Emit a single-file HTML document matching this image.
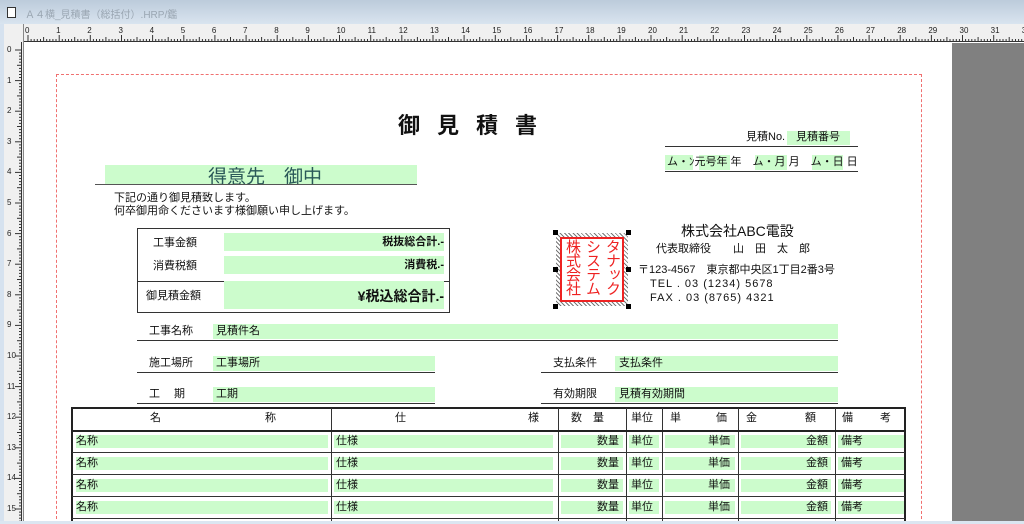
<!DOCTYPE html>
<html style="width:1024px;height:524px;overflow:hidden"><head><meta charset="utf-8"><style>
*{margin:0;padding:0;box-sizing:border-box}
body{width:1024px;height:524px;overflow:hidden;position:relative;background:#fff;font-family:"Liberation Sans","Noto Sans CJK JP",sans-serif;color:#111}
.a{position:absolute;white-space:nowrap}
.g{position:absolute;background:#ccfccc}
.l{position:absolute;height:1px;background:#333}
.t{font-size:11px;line-height:13px}
</style></head><body>
<div class="a" style="left:0;top:0;width:1024px;height:24px;background:linear-gradient(#bccbdb,#d9e4ef)"></div>
<div class="a" style="left:7px;top:7px;width:9px;height:11px;border:1px solid #333;background:#fff"></div>
<div class="a" style="left:25px;top:6px;font-size:10px;color:#9aa6b2">Ａ４横_見積書（総括付）.HRP/鑑</div>
<div class="a" style="left:0;top:24px;width:1024px;height:18px;background:#f0f0f0;border-bottom:1px solid #888"></div>
<div class="a" style="left:0;top:24px;width:24px;height:500px;background:#f0f0f0;border-right:1px solid #888"></div>
<div class="a" style="left:0;top:24px;width:4px;height:500px;background:#d6e2ef"></div>
<svg class="a" style="left:0;top:24px" width="1024" height="500">
<g stroke="#333" stroke-width="1">
<path d="M24 17.5H1024"/>
<path d="M21.5 18V500"/>
</g>
<g id="hx" stroke="#333"></g>
</svg>
<div id="ru"></div>
<div class="a" style="left:952px;top:43px;width:72px;height:481px;background:#808080"></div>
<div class="a" style="left:56px;top:74px;width:866px;height:450px;border:1px dashed #f07070;border-width:1px 1px 0 1px"></div>

<div class="a" style="left:398px;top:108px;font-size:22px;letter-spacing:17px;font-weight:bold">御見積書</div>

<div class="a t" style="left:746px;top:131px">見積No.</div>
<div class="g" style="left:787px;top:131px;width:63px;height:14px"></div>
<div class="a t" style="left:796px;top:131px">見積番号</div>
<div class="l" style="left:665px;top:146px;width:193px"></div>
<div class="g" style="left:665px;top:155px;width:28px;height:15px"></div>
<div class="g" style="left:699px;top:155px;width:31px;height:15px"></div>
<div class="g" style="left:755px;top:155px;width:32px;height:15px"></div>
<div class="g" style="left:812px;top:155px;width:31px;height:15px"></div>
<div class="a t" style="left:667px;top:156px">ム・ﾝ元号年 年　ム・月 月　ム・日 日</div>
<div class="l" style="left:665px;top:171px;width:193px"></div>

<div class="g" style="left:105px;top:165px;width:312px;height:19px"></div>
<div class="a" style="left:208px;top:162px;font-size:19px;color:#2a5858">得意先　御中</div>
<div class="l" style="left:95px;top:184px;width:322px;background:#555"></div>
<div class="a t" style="left:114px;top:192px">下記の通り御見積致します。<br>何卒御用命くださいます様御願い申し上げます。</div>

<div class="a" style="left:137px;top:228px;width:313px;height:85px;border:1px solid #333"></div>
<div class="l" style="left:137px;top:281px;width:88px"></div>
<div class="l" style="left:444px;top:281px;width:6px"></div>
<div class="g" style="left:224px;top:233px;width:220px;height:18px"></div>
<div class="g" style="left:224px;top:256px;width:220px;height:18px"></div>
<div class="g" style="left:224px;top:281px;width:220px;height:28px"></div>
<div class="a t" style="left:153px;top:237px">工事金額</div>
<div class="a t" style="left:153px;top:260px">消費税額</div>
<div class="a t" style="left:146px;top:290px">御見積金額</div>
<div class="a t" style="right:580px;top:236px;font-weight:bold">税抜総合計.-</div>
<div class="a t" style="right:580px;top:259px;font-weight:bold">消費税.-</div>
<div class="a" style="right:580px;top:286px;font-size:14px;font-weight:bold">¥税込総合計.-</div>

<div class="a" style="left:556px;top:233px;width:72px;height:73px;background:repeating-linear-gradient(45deg,#777 0 1px,#fff 1px 3px)"></div>
<div class="a" style="left:560px;top:237px;width:64px;height:65px;background:#fff;border:2px solid #e22"></div>
<div class="a" style="left:562px;top:239px;font-size:15px;line-height:20px;color:#e22;writing-mode:vertical-rl;height:62px;letter-spacing:-1px">タナック<br>システム<br>株式会社</div>
<div class="a" style="left:553px;top:230px;width:5px;height:5px;background:#000"></div>
<div class="a" style="left:626px;top:230px;width:5px;height:5px;background:#000"></div>
<div class="a" style="left:553px;top:304px;width:5px;height:5px;background:#000"></div>
<div class="a" style="left:626px;top:304px;width:5px;height:5px;background:#000"></div>
<div class="a" style="left:553px;top:267px;width:5px;height:5px;background:#000"></div>
<div class="a" style="left:626px;top:267px;width:5px;height:5px;background:#000"></div>

<div class="a" style="left:681px;top:221px;font-size:14px">株式会社ABC電設</div>
<div class="a t" style="left:656px;top:243px">代表取締役　　山　田　太　郎</div>
<div class="a t" style="left:638px;top:264px">〒123-4567　東京都中央区1丁目2番3号</div>
<div class="a t" style="left:650px;top:278px;letter-spacing:1px">TEL . 03 (1234) 5678</div>
<div class="a t" style="left:650px;top:292px;letter-spacing:1px">FAX . 03 (8765) 4321</div>

<div class="g" style="left:213px;top:324px;width:625px;height:15px"></div>
<div class="a t" style="left:149px;top:325px">工事名称</div><div class="a t" style="left:216px;top:325px">見積件名</div>
<div class="l" style="left:137px;top:340px;width:701px"></div>
<div class="g" style="left:213px;top:356px;width:222px;height:15px"></div>
<div class="a t" style="left:149px;top:357px">施工場所</div><div class="a t" style="left:216px;top:357px">工事場所</div>
<div class="l" style="left:137px;top:372px;width:298px"></div>
<div class="g" style="left:615px;top:356px;width:223px;height:15px"></div>
<div class="a t" style="left:553px;top:357px">支払条件</div><div class="a t" style="left:619px;top:357px">支払条件</div>
<div class="l" style="left:541px;top:372px;width:297px"></div>
<div class="g" style="left:213px;top:387px;width:222px;height:15px"></div>
<div class="a t" style="left:149px;top:388px">工　 期</div><div class="a t" style="left:216px;top:388px">工期</div>
<div class="l" style="left:137px;top:403px;width:298px"></div>
<div class="g" style="left:615px;top:387px;width:223px;height:15px"></div>
<div class="a t" style="left:553px;top:388px">有効期限</div><div class="a t" style="left:619px;top:388px">見積有効期間</div>
<div class="l" style="left:541px;top:403px;width:297px"></div>

<div class="a" style="left:71px;top:407px;width:835px;height:117px;border:2px solid #222;border-bottom:0"></div>
<div id="tb"></div>
<div class="a" style="left:0;top:521px;width:1024px;height:3px;background:#dbe6f1"></div>
<script>
var s='';
var cols=[331,558,626,662,738,835];
cols.forEach(function(x){s+='<div class="a" style="left:'+x+'px;top:408px;width:1px;height:113px;background:#333"></div>'});
s+='<div class="l" style="left:72px;top:430px;width:833px;height:2px;background:#222"></div>';
var hd=[[150,'名'],[265,'称'],[395,'仕'],[528,'様'],[571,'数　量'],[631,'単位'],[670,'単'],[716,'価'],[746,'金'],[805,'額'],[842,'備'],[880,'考']];
hd.forEach(function(h){s+='<div class="a t" style="left:'+h[0]+'px;top:412px">'+h[1]+'</div>'});
[430,452,474,496].forEach(function(y,i){
 if(i>0)s+='<div class="l" style="left:72px;top:'+y+'px;width:833px"></div>';
 var gy=y+5;
 [[76,252],[334,219],[561,62],[629,30],[665,70],[741,90],[838,66]].forEach(function(g){s+='<div class="g" style="left:'+g[0]+'px;top:'+gy+'px;width:'+g[1]+'px;height:13px"></div>'});
 var ty=y+5;
 s+='<div class="a t" style="left:76px;top:'+ty+'px">名称</div><div class="a t" style="left:336px;top:'+ty+'px">仕様</div><div class="a t" style="left:597px;top:'+ty+'px">数量</div><div class="a t" style="left:631px;top:'+ty+'px">単位</div><div class="a t" style="left:708px;top:'+ty+'px">単価</div><div class="a t" style="left:806px;top:'+ty+'px">金額</div><div class="a t" style="left:841px;top:'+ty+'px">備考</div>';
});
s+='<div class="l" style="left:72px;top:518px;width:833px"></div>';
document.getElementById('tb').innerHTML=s;
var r='',p='';
for(var i=0;i<=32;i++){var x=28+i*31.15;r+='<div class="a" style="left:'+(x-3)+'px;top:26px;font-size:8px;color:#222">'+i+'</div>';}
for(var j=0;j<=320;j++){var x=28+j*3.115;var h=j%10==0?6:(j%5==0?4:2);p+='<path d="M'+x.toFixed(1)+' '+(17-h)+'V17"/>';}
for(var i=0;i<=15;i++){var y=50+i*30.6;r+='<div class="a" style="left:7px;top:'+(y-5)+'px;font-size:8px;color:#222">'+i+'</div>';}
for(var j=0;j<=155;j++){var y=50+j*3.06-24;var w=j%10==0?6:(j%5==0?4:2);p+='<path d="M'+(21-w)+' '+y.toFixed(1)+'H21"/>';}
document.getElementById('hx').innerHTML=p;
document.getElementById('ru').innerHTML=r;
</script>
</body></html>
